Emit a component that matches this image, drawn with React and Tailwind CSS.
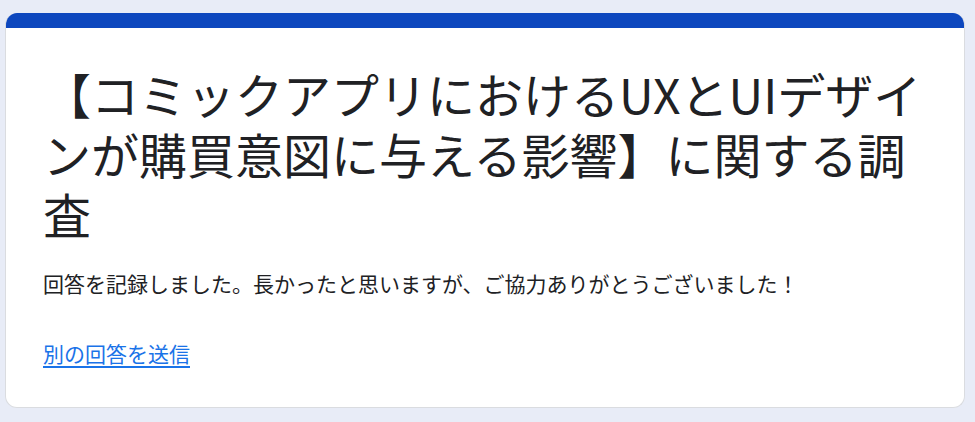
import React from 'react'

function App() {
  return (
    <div className="min-h-screen bg-[#e8ecf7] pt-[13px] pl-[5px]" style={{ fontFamily: '"Noto Sans CJK JP", "Noto Sans", sans-serif' }}>
      {/* Card */}
      <div className="w-[960px] bg-white rounded-[12px] overflow-hidden border border-[#dadce0] border-t-0">
        {/* Top colour bar */}
        <div className="h-[15px] bg-[#0d47be]"></div>

        <div className="px-[37px] pt-[35px] pb-[38px]">
          <h1 className="text-[48px] leading-[60px] text-[#202124] font-normal">
            【コミックアプリにおけるUXとUIデザインが購買意図に与える影響】に関する調査
          </h1>
          <p className="mt-[24px] text-[21px] leading-[32px] text-[#202124]">
            回答を記録しました。長かったと思いますが、ご協力ありがとうございました！
          </p>
          <a href="#" className="block mt-[38px] text-[21px] leading-[32px] text-[#1a73e8] underline underline-offset-[4px]">
            別の回答を送信
          </a>
        </div>
      </div>
    </div>
  )
}

export default App
